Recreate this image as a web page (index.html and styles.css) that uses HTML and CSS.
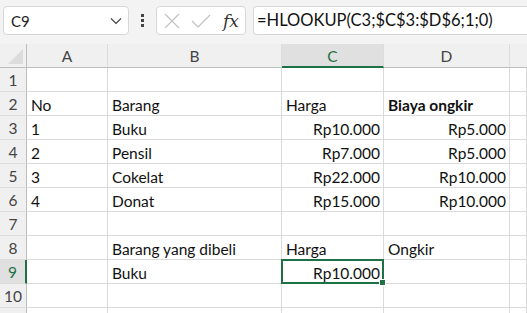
FILE: index.html
```html
<!DOCTYPE html>
<html lang="id">
<head>
  <meta charset="UTF-8">
  <title>HLOOKUP</title>
  <link rel="stylesheet" href="styles.css">
</head>
<body>
  <div class="toolbar">
    <div class="namebox">
      <span>C9</span>
      <svg class="chev" width="12" height="8" viewBox="0 0 12 8"><path d="M1 1.5 L6 6.5 L11 1.5" fill="none" stroke="#444" stroke-width="1.2"/></svg>
    </div>
    <div class="dots"><i></i><i></i><i></i></div>
    <div class="fxbox">
      <svg width="16" height="16" viewBox="0 0 16 16"><path d="M1 1 L15 15 M15 1 L1 15" stroke="#c4c4c4" stroke-width="1.3"/></svg>
      <svg width="20" height="14" viewBox="0 0 20 14"><path d="M1 7 L7 13 L19 1" fill="none" stroke="#c4c4c4" stroke-width="1.3"/></svg>
      <span class="fx">fx</span>
    </div>
    <div class="formula">=HLOOKUP(C3;$C$3:$D$6;1;0)</div>
  </div>

  <div class="sheet">
    <div class="hd corner"><div class="tri"></div></div>
    <div class="hd">A</div>
    <div class="hd">B</div>
    <div class="hd sel">C</div>
    <div class="hd">D</div>
    <div class="hd last"></div>

    <div class="rn">1</div><div class="c"></div><div class="c"></div><div class="c"></div><div class="c"></div><div class="c"></div>
    <div class="rn">2</div><div class="c">No</div><div class="c">Barang</div><div class="c">Harga</div><div class="c b">Biaya ongkir</div><div class="c"></div>
    <div class="rn">3</div><div class="c">1</div><div class="c">Buku</div><div class="c r">Rp10.000</div><div class="c r">Rp5.000</div><div class="c"></div>
    <div class="rn">4</div><div class="c">2</div><div class="c">Pensil</div><div class="c r">Rp7.000</div><div class="c r">Rp5.000</div><div class="c"></div>
    <div class="rn">5</div><div class="c">3</div><div class="c">Cokelat</div><div class="c r">Rp22.000</div><div class="c r">Rp10.000</div><div class="c"></div>
    <div class="rn">6</div><div class="c">4</div><div class="c">Donat</div><div class="c r">Rp15.000</div><div class="c r">Rp10.000</div><div class="c"></div>
    <div class="rn">7</div><div class="c"></div><div class="c"></div><div class="c"></div><div class="c"></div><div class="c"></div>
    <div class="rn">8</div><div class="c"></div><div class="c">Barang yang dibeli</div><div class="c">Harga</div><div class="c">Ongkir</div><div class="c"></div>
    <div class="rn sel">9</div><div class="c"></div><div class="c">Buku</div><div class="c r active">Rp10.000</div><div class="c"></div><div class="c"></div>
    <div class="rn">10</div><div class="c"></div><div class="c"></div><div class="c"></div><div class="c"></div><div class="c"></div>
    <div class="rn"></div><div class="c"></div><div class="c"></div><div class="c"></div><div class="c"></div><div class="c"></div>
  </div>
</body>
</html>
```

FILE: styles.css
```css
* {
  box-sizing: border-box;
}
body {
  margin: 0;
  background: #fff;
  font-family: Lato, "Liberation Sans", sans-serif;
  overflow: hidden;
}
.toolbar {
  height: 44px;
  background: #f3f3f3;
  display: flex;
  align-items: flex-start;
  padding: 6px 0 0 3px;
}
.namebox {
  width: 126px;
  height: 29px;
  background: #fff;
  border: 1px solid #d7d7d7;
  border-radius: 4px;
  display: flex;
  align-items: center;
  justify-content: space-between;
  padding: 0 6px 0 7px;
  font-size: 15px;
  color: #222;
}
.chev {
  margin-top: 1px;
}
.dots {
  width: 27px;
  height: 29px;
  display: flex;
  flex-direction: column;
  align-items: center;
  justify-content: center;
  gap: 2px;
}
.dots i {
  width: 3px;
  height: 3px;
  background: #444;
}
.fxbox {
  width: 90px;
  height: 29px;
  background: #fff;
  border: 1px solid #d7d7d7;
  border-radius: 4px;
  display: flex;
  align-items: center;
  padding: 0 6px 0 7px;
  gap: 11px;
}
.fx {
  font-family: "DejaVu Serif", serif;
  font-style: italic;
  font-size: 17px;
  color: #333;
  margin-left: 1px;
}
.formula {
  flex: 1;
  margin-left: 7px;
  height: 29px;
  background: #fff;
  border: 1px solid #d7d7d7;
  border-right: none;
  border-radius: 4px 0 0 4px;
  font-size: 16.5px;
  color: #111;
  line-height: 27px;
  padding-left: 3px;
  white-space: nowrap;
}
.sheet {
  display: grid;
  grid-template-columns: 27px 81px 174px 102px 126px 1fr;
  grid-template-rows: 24px;
  grid-auto-rows: 24px;
  font-size: 15.5px;
}
.hd {
  background: #f0f0f0;
  border-bottom: 1px solid #bdbdbd;
  border-right: 1px solid #dcdcdc;
  color: #444;
  text-align: center;
  line-height: 24px;
  font-size: 15.5px;
}
.hd.corner {
  border-right: 1px solid #bdbdbd;
  position: relative;
}
.tri {
  position: absolute;
  right: 3px;
  bottom: 3px;
  width: 0;
  height: 0;
  border-left: 15px solid transparent;
  border-bottom: 15px solid #dcdcdc;
}
.hd.last {
  border-right: none;
}
.hd.sel {
  background: #e0e0e0;
  color: #1e7145;
  border-bottom: 2px solid #1e7145;
}
.rn {
  background: #f0f0f0;
  border-right: 1px solid #bdbdbd;
  border-bottom: 1px solid #dcdcdc;
  color: #444;
  text-align: center;
  line-height: 24px;
}
.rn.sel {
  background: #e0e0e0;
  color: #1e7145;
  border-right: 2px solid #1e7145;
}
.c {
  border-right: 1px solid #dadada;
  border-bottom: 1px solid #dadada;
  padding: 0 3px 0 4px;
  line-height: 26px;
  color: #111;
  white-space: nowrap;
}
.c.r {
  text-align: right;
}
.c.b {
  font-weight: bold;
}
.c.active {
  position: relative;
}
.c.active::after {
  content: "";
  position: absolute;
  left: -1px;
  top: -1px;
  right: -1px;
  bottom: -1px;
  border: 2px solid #1e7145;
}
.c.active::before {
  content: "";
  position: absolute;
  right: -3px;
  bottom: -3px;
  width: 5px;
  height: 5px;
  background: #1e7145;
  border: 1px solid #fff;
  z-index: 1;
}
```
